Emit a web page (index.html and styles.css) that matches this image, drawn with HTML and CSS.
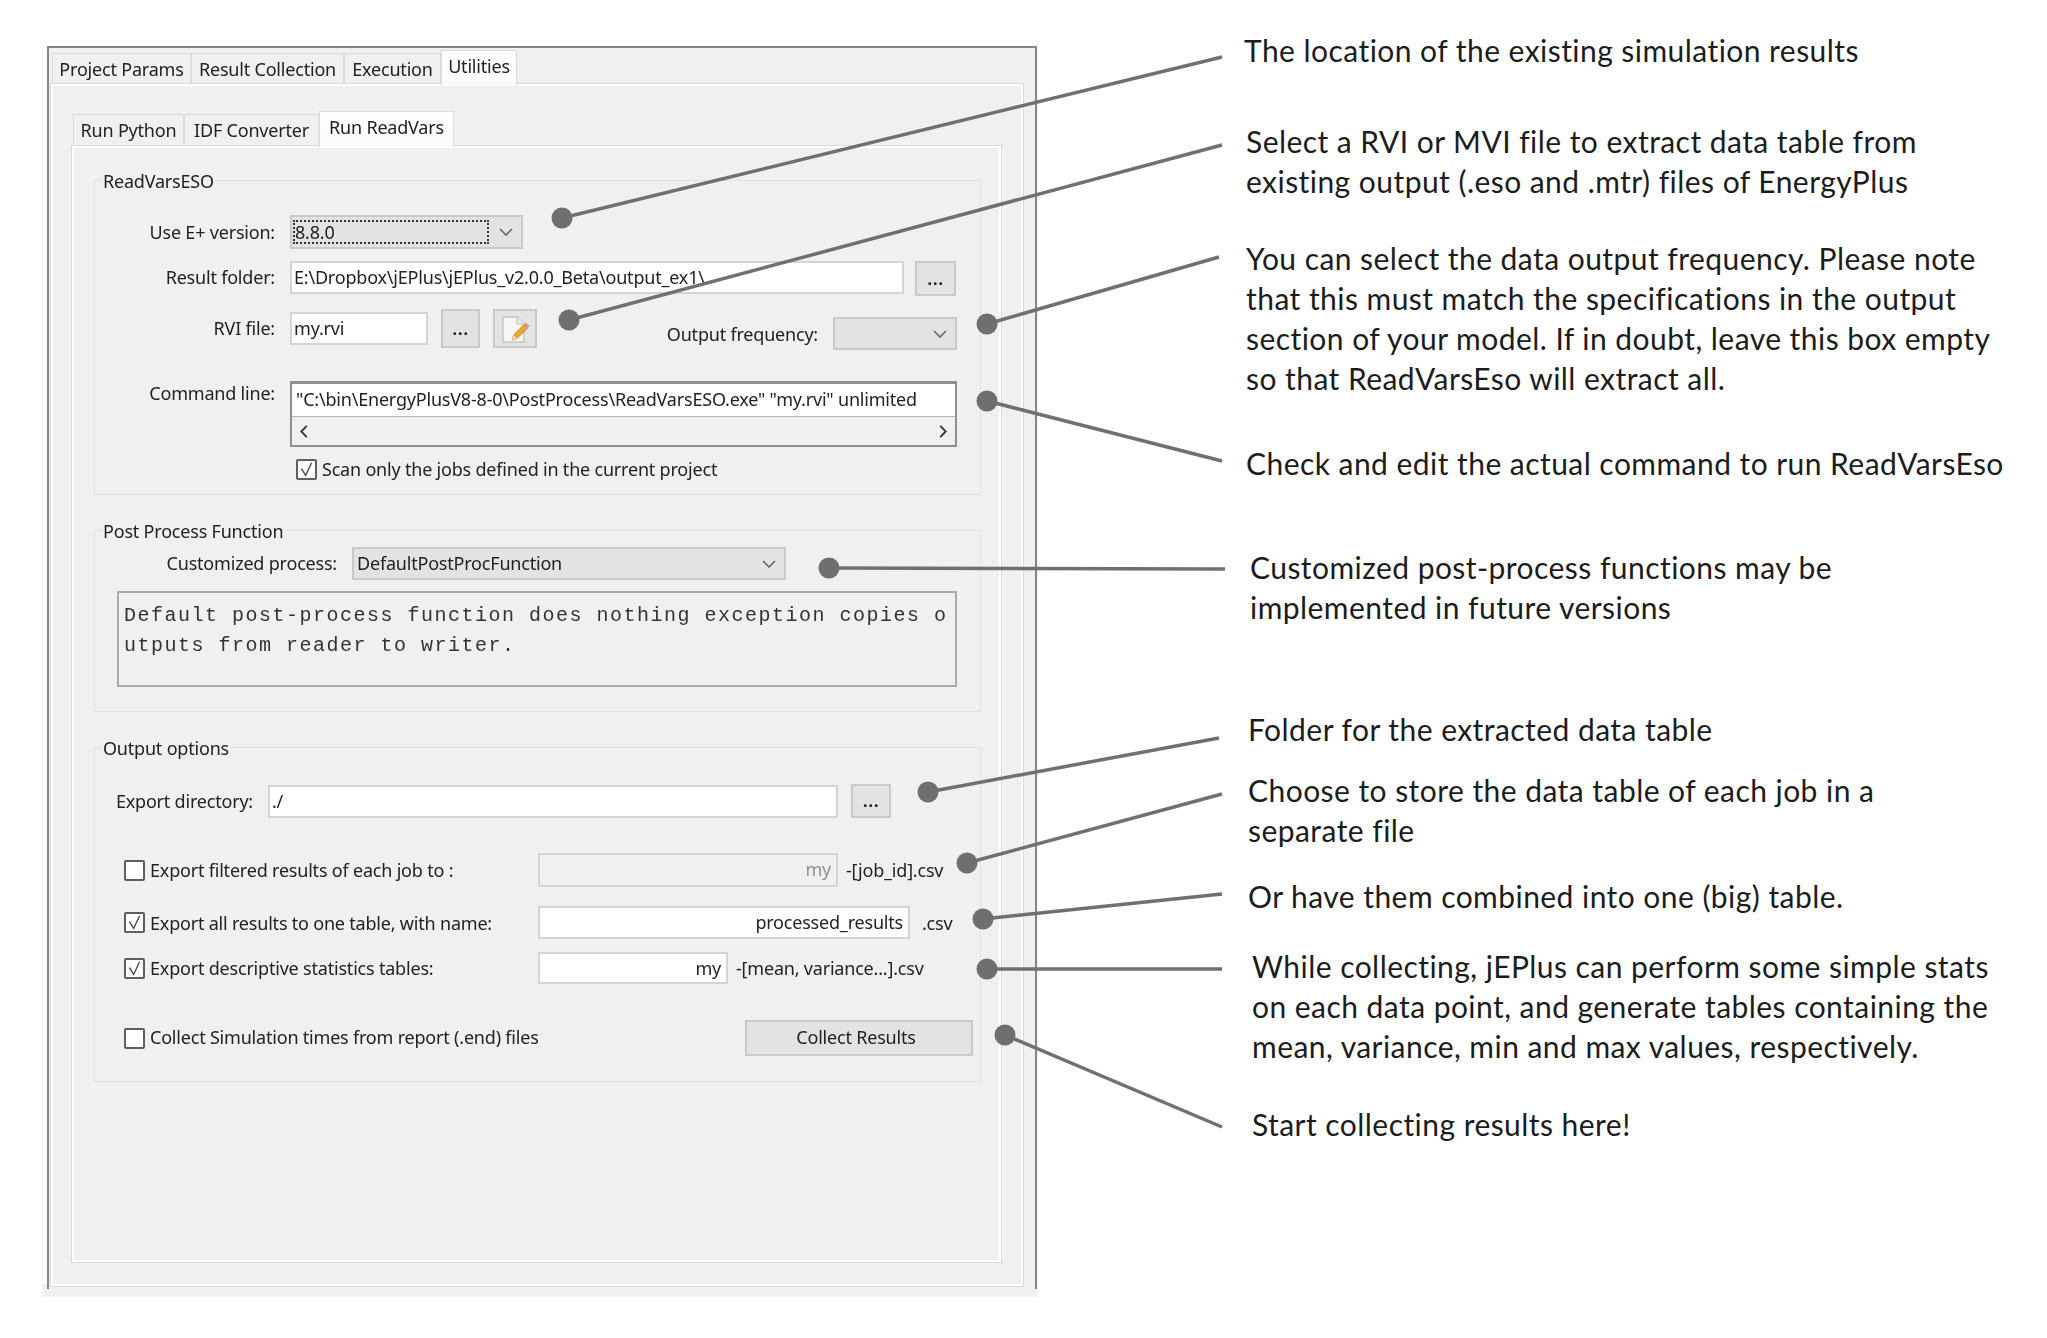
FILE: index.html
```html
<!DOCTYPE html>
<html lang="en">
<head>
<meta charset="utf-8">
<title>jEPlus Run ReadVars</title>
<link rel="stylesheet" href="styles.css">
</head>
<body>
<main class="stage">
  <section class="frame">
    <div class="window">
      <div class="tabs outer-tabs">
        <div class="tab t-pp">Project Params</div>
        <div class="tab t-rc">Result Collection</div>
        <div class="tab t-ex">Execution</div>
        <div class="tab active t-ut">Utilities</div>
      </div>
      <div class="panel outer-panel">
        <div class="tabs inner-tabs">
          <div class="tab t-py">Run Python</div>
          <div class="tab t-idf">IDF Converter</div>
          <div class="tab active t-rv">Run ReadVars</div>
        </div>
        <div class="panel inner-panel">

          <div class="group g-read">
            <div class="legend">ReadVarsESO</div>
            <div class="row r-ver">
              <label class="lab lab-a">Use E+ version:</label>
              <div class="combo c-ver"><span class="focus">8.8.0</span><svg class="chev" viewBox="0 0 14 8"><path d="M1 1l6 6 6-6"/></svg></div>
            </div>
            <div class="row r-folder">
              <label class="lab lab-a">Result folder:</label>
              <div class="field f-folder">E:\Dropbox\jEPlus\jEPlus_v2.0.0_Beta\output_ex1\</div>
              <div class="btn b-dots b-folder">...</div>
            </div>
            <div class="row r-rvi">
              <label class="lab lab-a">RVI file:</label>
              <div class="field f-rvi">my.rvi</div>
              <div class="btn b-dots b-rvi">...</div>
              <div class="btn b-edit">
                <svg class="edit-ico" viewBox="0 0 30 30">
                  <path d="M3 3h14l7 7v18H3z" fill="#f7f7f7" stroke="#c4c4c4" stroke-width="1.4"/>
                  <path d="M17 3v7h7" fill="#ececec" stroke="#c4c4c4" stroke-width="1.2"/>
                  <path d="M12 26l1.600-5L24 10.500l3.600 3.500L17 24.500z" fill="#f2a32a" stroke="#b97a1e" stroke-width=".8"/>
                  <path d="M24 10.500l2-2 3.600 3.500-2 2z" fill="#e88aa8"/>
                  <path d="M12 26l1.600-5 3.400 3.500z" fill="#f6dfba"/>
                </svg>
              </div>
              <div class="freq">
                <label class="lab">Output frequency:</label>
                <div class="combo c-freq"><span></span><svg class="chev" viewBox="0 0 14 8"><path d="M1 1l6 6 6-6"/></svg></div>
              </div>
            </div>
            <div class="row r-cmd">
              <label class="lab lab-a">Command line:</label>
              <div class="cmd">
                <div class="cmd-text">"C:\bin\EnergyPlusV8-8-0\PostProcess\ReadVarsESO.exe" "my.rvi" unlimited</div>
                <div class="scroll">
                  <svg class="arrow" viewBox="0 0 8 14"><path d="M7 1L1 7l6 6"/></svg>
                  <svg class="arrow" viewBox="0 0 8 14"><path d="M1 1l6 6-6 6"/></svg>
                </div>
              </div>
            </div>
            <div class="row r-scan">
              <span class="check on"><svg viewBox="0 0 20 20"><path d="M4 9l5 8 7-15"/></svg></span>
              <span class="lab-free">Scan only the jobs defined in the current project</span>
            </div>
          </div>

          <div class="group g-post">
            <div class="legend">Post Process Function</div>
            <div class="row r-cust">
              <label class="lab lab-b">Customized process:</label>
              <div class="combo c-proc"><span>DefaultPostProcFunction</span><svg class="chev" viewBox="0 0 14 8"><path d="M1 1l6 6 6-6"/></svg></div>
            </div>
            <div class="desc">Default post-process function does nothing exception copies o<br>utputs from reader to writer.</div>
          </div>

          <div class="group g-out">
            <div class="legend">Output options</div>
            <div class="row r-dir">
              <label class="lab lab-c">Export directory:</label>
              <div class="field f-dir">./</div>
              <div class="btn b-dots b-dir">...</div>
            </div>
            <div class="row r-1">
              <span class="check"></span>
              <span class="lab-free w-opt">Export filtered results of each job to :</span>
              <div class="field right disabled f-1">my</div>
              <span class="suffix s-1">-[job_id].csv</span>
            </div>
            <div class="row r-2">
              <span class="check on"><svg viewBox="0 0 20 20"><path d="M4 9l5 8 7-15"/></svg></span>
              <span class="lab-free w-opt">Export all results to one table, with name:</span>
              <div class="field right f-2">processed_results</div>
              <span class="suffix s-2">.csv</span>
            </div>
            <div class="row r-3">
              <span class="check on"><svg viewBox="0 0 20 20"><path d="M4 9l5 8 7-15"/></svg></span>
              <span class="lab-free w-opt">Export descriptive statistics tables:</span>
              <div class="field right f-3">my</div>
              <span class="suffix s-1">-[mean, variance...].csv</span>
            </div>
            <div class="row r-4">
              <span class="check"></span>
              <span class="lab-free">Collect Simulation times from report (.end) files</span>
              <div class="btn b-collect">Collect Results</div>
            </div>
          </div>

        </div>
      </div>
    </div>
  </section>

  <aside class="notes">
    <p class="note n1">The location of the existing simulation results</p>
    <p class="note n2">Select a RVI or MVI file to extract data table from<br>existing output (.eso and .mtr) files of EnergyPlus</p>
    <p class="note n3">You can select the data output frequency. Please note<br>that this must match the specifications in the output<br>section of your model. If in doubt, leave this box empty<br>so that ReadVarsEso will extract all.</p>
    <p class="note n4">Check and edit the actual command to run ReadVarsEso</p>
    <p class="note n5">Customized post-process functions may be<br>implemented in future versions</p>
    <p class="note n6">Folder for the extracted data table</p>
    <p class="note n7">Choose to store the data table of each job in a<br>separate file</p>
    <p class="note n8">Or have them combined into one (big) table.</p>
    <p class="note n9">While collecting, jEPlus can perform some simple stats<br>on each data point, and generate tables containing the<br>mean, variance, min and max values, respectively.</p>
    <p class="note n10">Start collecting results here!</p>
  </aside>

  <svg class="leaders" viewBox="0 0 2047 1338">
    <g class="lines">
      <path d="M562 218L1222 57"/>
      <path d="M569 320L1222 145"/>
      <path d="M987 324L1219 257"/>
      <path d="M987 401L1222 461"/>
      <path d="M829 568L1225 569"/>
      <path d="M928 792L1219 738"/>
      <path d="M967 863L1222 794"/>
      <path d="M983 919L1222 894"/>
      <path d="M987 969L1222 969"/>
      <path d="M1005 1035L1222 1127"/>
    </g>
    <g class="dots">
      <circle cx="562" cy="218" r="10.5"/>
      <circle cx="569" cy="320" r="10.5"/>
      <circle cx="987" cy="324" r="10.5"/>
      <circle cx="987" cy="401" r="10.5"/>
      <circle cx="829" cy="568" r="10.5"/>
      <circle cx="928" cy="792" r="10.5"/>
      <circle cx="967" cy="863" r="10.5"/>
      <circle cx="983" cy="919" r="10.5"/>
      <circle cx="987" cy="969" r="10.5"/>
      <circle cx="1005" cy="1035" r="10.5"/>
    </g>
  </svg>
</main>
</body>
</html>
```

FILE: styles.css
```css
* { box-sizing: border-box; }
html, body { margin: 0; padding: 0; background: #fff; }
body { width: 2047px; height: 1338px; overflow: hidden; }

.stage {
  position: relative;
  display: flex;
  width: 2047px;
  height: 1338px;
  padding-left: 42px;
  font-family: "Noto Sans", "Liberation Sans", sans-serif;
  font-size: 18px;
  letter-spacing: -0.2px;
  color: #222;
}

/* window */
.frame {
  width: 996px;
  height: 1257px;
  margin-top: 40px;
  padding: 5px 0 0 4px;
  border: 1px solid #f3f3f3;
  border-top-color: #f8f8f8;
  background: linear-gradient(#fff, #fff) no-repeat top / 100% 1243px, #f0f0f0;
  flex: none;
  filter: blur(0.3px);
}
.window {
  width: 990px;
  height: 1243px;
  padding: 2px 0 0 1px;
  border: solid #858585;
  border-width: 2px 2px 0 2px;
  background: #f0f0f0;
}

/* tabs */
.tabs { display: flex; align-items: flex-end; position: relative; z-index: 1; }
.tab {
  display: flex;
  align-items: center;
  justify-content: center;
  height: 30px;
  margin-bottom: 3px;
  border: 1px solid #dcdcdc;
  border-bottom: 0;
  background: #f0f0f0;
  white-space: nowrap;
}
.tab.active {
  height: 36px;
  margin-bottom: 0;
  padding-bottom: 5px;
  background: linear-gradient(#fff, #fafafa);
}
.outer-tabs { height: 36px; margin: 0 0 -3px 2px; }
.inner-tabs { height: 36px; margin: 0 0 -2px 2px; }
.t-pp { width: 139px; }
.t-rc { width: 153px; }
.t-ex { width: 97px; }
.t-ut { width: 76px; }
.t-py { width: 111px; }
.t-idf { width: 135px; }
.t-rv { width: 135px; }

.panel {
  border: 1px solid #d9d9d9;
  box-shadow: inset 0 0 0 2px #fff;
  background: #f0f0f0;
}
.outer-panel {
  width: 974px;
  height: 1204px;
  padding: 27px 0 0 20px;
}
.inner-panel {
  width: 931px;
  height: 1118px;
  padding: 34px 0 0 22px;
}

/* groups */
.group {
  width: 887px;
  border: 1px solid #e2e2e2;
}
.g-read { height: 315px; }
.g-post { height: 182px; margin-top: 35px; }
.g-out { height: 335px; margin-top: 35px; }
.legend {
  width: fit-content;
  height: 24px;
  margin: -12px 0 0 7px;
  padding: 0 1px;
  line-height: 24px;
  background: #f0f0f0;
  white-space: nowrap;
}

.row { display: flex; align-items: center; }
.lab { white-space: nowrap; text-align: right; flex: none; line-height: 24px; }
.lab-a { width: 180px; margin-right: 15px; }
.lab-b { width: 242px; margin-right: 15px; }
.lab-c { width: 158px; margin-right: 15px; }
.lab-free { white-space: nowrap; flex: none; line-height: 22px; }

.r-ver { margin-top: 22px; }
.r-folder { margin-top: 12px; height: 35px; align-items: flex-start; }
.r-folder .lab { margin-top: 4px; }
.r-rvi { margin-top: 13px; height: 41px; padding-right: 23px; align-items: flex-start; }
.r-rvi .lab-a { margin-top: 7px; }
.r-rvi .f-rvi { margin-top: 3px; }
.r-cmd { margin-top: 31px; align-items: flex-start; }
.r-scan { margin-top: 11px; margin-left: 201px; }
.r-cust { margin-top: 4px; }
.r-cust .lab { margin-bottom: 2px; }
.r-cust .combo span { margin-bottom: 2px; }
.r-dir { margin-top: 24px; }
.r-1, .r-2, .r-3, .r-4 { padding-left: 29px; }
.r-1 { margin-top: 35px; }
.r-2 { margin-top: 19px; }
.r-3 { margin-top: 13px; }
.r-4 { margin-top: 36px; padding-right: 7px; }
.r-4 .lab-free { margin-bottom: 2px; }
.w-opt { width: 388px; }

/* controls */
.field {
  height: 33px;
  padding: 0 2px;
  line-height: 29px;
  background: #fff;
  border: 2px solid #d4d4d4;
  white-space: nowrap;
  overflow: hidden;
  flex: none;
}
.field.right { text-align: right; padding-right: 5px; }
.field.disabled { background: #f0f0f0; color: #8f8f8f; }
.f-folder { width: 614px; }
.f-rvi { width: 138px; }
.f-dir { width: 570px; }
.f-1 { width: 300px; height: 34px; }
.f-2 { width: 372px; }
.f-3 { width: 190px; height: 32px; }
.suffix { white-space: nowrap; }
.s-1 { margin-left: 8px; }
.s-2 { margin-left: 12px; }

.btn {
  display: flex;
  align-items: center;
  justify-content: center;
  border: 2px solid #c9c9c9;
  background: #e3e3e3;
  flex: none;
}
.b-dots { width: 41px; height: 35px; padding-bottom: 2px; font-weight: 600; letter-spacing: 0.5px; }
.b-folder { margin-left: 11px; }
.b-rvi { width: 39px; height: 39px; margin-left: 13px; }
.b-edit { width: 44px; height: 39px; margin-left: 13px; }
.b-dir { width: 40px; height: 34px; margin-left: 13px; }
.b-collect { width: 228px; height: 36px; margin-left: auto; padding: 0 6px 2px 0; }
.edit-ico { width: 30px; height: 30px; }

.combo {
  display: flex;
  align-items: center;
  justify-content: space-between;
  border: 2px solid #c9c9c9;
  background: #e3e3e3;
  padding-left: 3px;
  padding-right: 8px;
  flex: none;
  white-space: nowrap;
}
.chev { width: 14px; height: 8px; fill: none; stroke: #666; stroke-width: 1.6; flex: none; }
.c-ver { width: 233px; height: 34px; padding-left: 1px; }
.focus { width: 196px; height: 24px; line-height: 20px; padding-left: 0; border: 2px dotted #333; }
.c-freq { width: 124px; height: 33px; }
.c-proc { width: 434px; height: 33px; padding-left: 3px; }
.freq { display: flex; align-items: center; margin: 8px 0 0 auto; }
.freq .lab { margin-right: 15px; }

.cmd {
  width: 667px;
  height: 66px;
  border: 2px solid #8f8f8f;
  border-top-width: 3px;
  background: #f0f0f0;
}
.cmd-text {
  height: 32px;
  padding-left: 4px;
  line-height: 31px;
  background: #fff;
  white-space: nowrap;
  overflow: hidden;
}
.scroll {
  display: flex;
  justify-content: space-between;
  align-items: center;
  height: 29px;
  padding: 0 8px;
  border-top: 1px solid #b5b5b5;
}
.arrow { width: 8px; height: 13px; fill: none; stroke: #333; stroke-width: 2; }

.check {
  display: block;
  width: 21px;
  height: 21px;
  margin-right: 5px;
  border: 2px solid #5f5f5f;
  border-radius: 2px;
  background: #fff;
  flex: none;
}
.check svg { display: block; width: 17px; height: 17px; fill: none; stroke: #444; stroke-width: 1.6; }

.desc {
  width: 840px;
  height: 96px;
  margin: 11px 0 0 22px;
  padding: 8px 0 0 5px;
  border: 2px solid #a9a9b0;
  background: #f0f0f0;
  font-family: "Liberation Mono", monospace;
  font-size: 20px;
  letter-spacing: 1.5px;
  line-height: 30px;
  white-space: nowrap;
  overflow: hidden;
  color: #333;
}

/* notes */
.notes {
  margin-left: 206px;
  padding-top: 30px;
  font-family: Lato, "Open Sans", sans-serif;
  font-size: 30px;
  letter-spacing: 0.45px;
  color: #1c1c1c;
  flex: none;
}
.note { margin: 0; line-height: 40px; white-space: nowrap; }
.n2 { margin: 51px 0 0 2px; }
.n3 { margin: 37px 0 0 2px; }
.n4 { margin: 45px 0 0 2px; }
.n5 { margin: 64px 0 0 6px; }
.n6 { margin: 82px 0 0 4px; }
.n7 { margin: 21px 0 0 4px; }
.n8 { margin: 26px 0 0 4px; }
.n9 { margin: 30px 0 0 8px; }
.n10 { margin: 38px 0 0 8px; }

/* overlay */
.leaders {
  position: absolute;
  left: 0;
  top: 0;
  width: 2047px;
  height: 1338px;
  pointer-events: none;
}
.lines path { fill: none; stroke: #707070; stroke-width: 3.5; }
.dots circle { fill: #6f6f6f; }
```
